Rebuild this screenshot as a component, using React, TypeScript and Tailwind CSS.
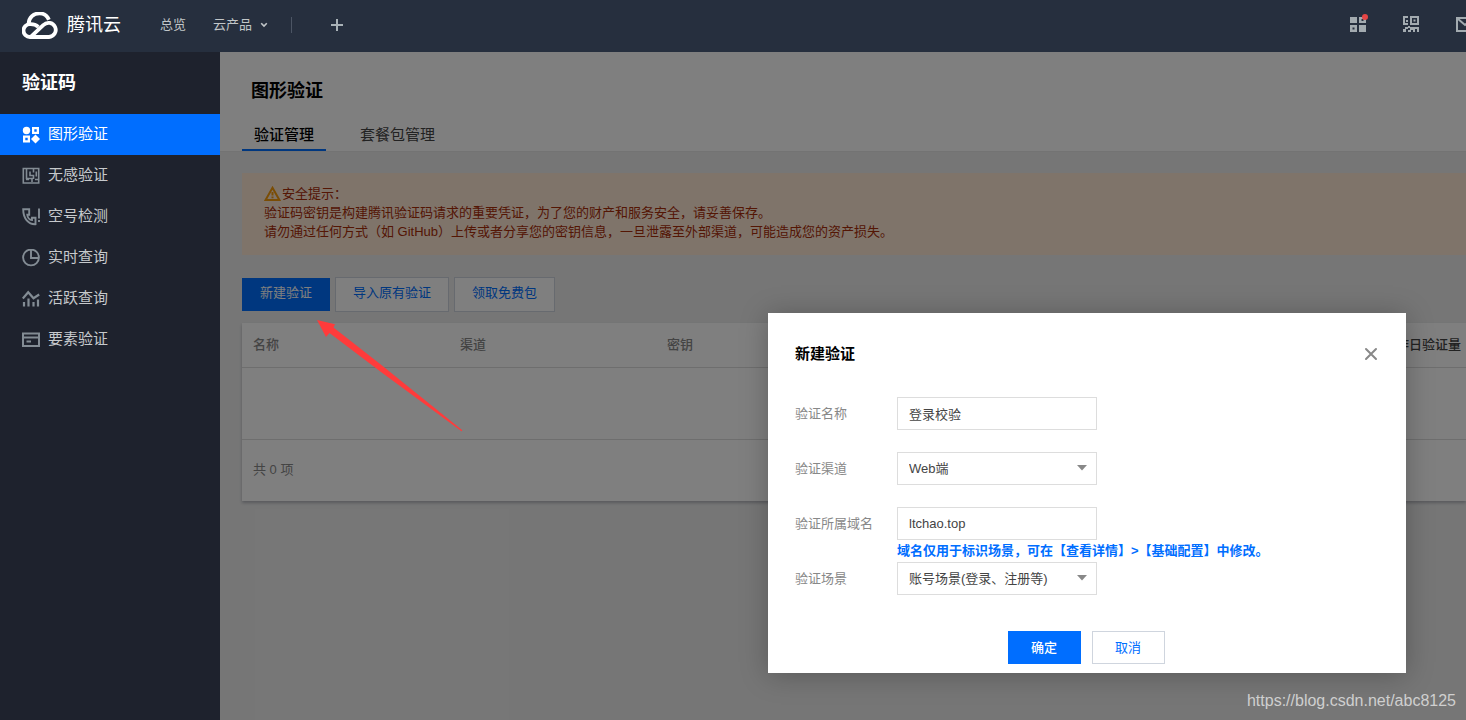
import React, { useState } from "react";

type IconProps = { className?: string };

const Logo = () => (
  <svg width="37" height="28" viewBox="1 1 37 28" fill="none" stroke="#fff" strokeWidth="3.800" aria-hidden="true">
    <path d="M7.6 12.6C8 6.4 12.500 2.400 18.500 2.400c4.300 0 7.900 2.700 9.400 6.300" />
    <path d="M17.300 15.800C14.700 13.500 12.100 12.900 8.800 13.100a6.400 6.400 0 0 0 .2 12.900h19a7.100 7.100 0 1 0-5.500-12L10 25.600" />
  </svg>
);

const ShapesIcon = ({ className }: IconProps) => (
  <svg className={className} width="18" height="18" viewBox="0 0 18 18" fill="currentColor" aria-hidden="true">
    <circle cx="4.500" cy="4.500" r="3.700" />
    <path d="M10 1h7v7h-7zm2.300 2.300v2.400h2.400V3.300z" fillRule="evenodd" />
    <path d="M1 9.500h7v7H1zm2.300 2.300v2.400h2.400v-2.400z" fillRule="evenodd" />
    <path d="M13.500 8.500L18 13l-4.500 4.500L9 13z" />
  </svg>
);

const MazeIcon = ({ className }: IconProps) => (
  <svg className={className} width="18" height="18" viewBox="0 0 18 18" fill="none" stroke="currentColor" strokeWidth="1.600" aria-hidden="true">
    <path d="M1.300 1.500h15.400v14.500H1.300z" />
    <path d="M4.500 2v9.500H10V15M8 4.500V8.500h3.500V12M11.500 2v3.500M14.300 4.500V9.500M13 12.500h3.500M4 12.500h3" />
  </svg>
);

const PhoneIcon = ({ className }: IconProps) => (
  <svg className={className} width="18" height="18" viewBox="0 0 18 18" fill="none" stroke="currentColor" strokeWidth="1.900" aria-hidden="true">
    <path d="M1.200 1.200h6v5.500H5.300C5.500 9.500 7.500 11.800 10 12v-2.300h3.500v6.500C6.500 16.500 1.200 10.500 1.200 1.200z" />
    <path d="M17 .500v10M17 12v2" />
  </svg>
);

const ClockIcon = ({ className }: IconProps) => (
  <svg className={className} width="18" height="18" viewBox="0 0 18 18" fill="none" stroke="currentColor" strokeWidth="1.900" aria-hidden="true">
    <circle cx="9" cy="8.500" r="7.900" />
    <path d="M9 1v8h8" />
  </svg>
);

const TrendIcon = ({ className }: IconProps) => (
  <svg className={className} width="18" height="18" viewBox="0 0 18 18" fill="none" stroke="currentColor" strokeWidth="2.200" aria-hidden="true">
    <path d="M.800 8.500l5.400-6.300 5.300 6L17.200 4.500" />
    <path d="M2 12v4.500M6.500 8.500v8M11.500 12v4.500M16 9.500v7" />
  </svg>
);

const CardIcon = ({ className }: IconProps) => (
  <svg className={className} width="18" height="18" viewBox="0 0 18 18" fill="none" stroke="currentColor" strokeWidth="2" aria-hidden="true">
    <path d="M1 2.500h16v12.500H1zM1 6.500h16M4.500 10.500H9" />
  </svg>
);

const AppsIcon = () => (
  <svg width="16" height="16" viewBox="0 0 16 16" fill="currentColor" aria-hidden="true">
    <path d="M0 1h7v6H0zM9 9h7v7H9z" />
    <path d="M9 1h7v6H9zm2.500 2v2h2V3zM0 9h7v7H0zm2.500 2.500v2h2v-2z" fillRule="evenodd" />
  </svg>
);

const QrIcon = () => (
  <svg width="16" height="16" viewBox="0 0 16 16" fill="currentColor" aria-hidden="true">
    <path d="M0 0h5v2H2v5h3v2H0zM3 4h2v2H3z" />
    <path d="M7 0h9v9H7zm2 2v5h5V2z" fillRule="evenodd" />
    <path d="M10.500 3.500h2v2h-2zM0 13h2v-2h3v2H3v3H0zM5 10h2v2H5zM7 11h7v2h-2v3h-2v-2H8v2H5v-2h2zM13 11h3v5h-2v-3h-1z" />
  </svg>
);

const MailIcon = () => (
  <svg width="18" height="16" viewBox="0 0 18 16" fill="none" stroke="currentColor" strokeWidth="2" aria-hidden="true">
    <path d="M1 2h16v13H1zM1.500 2.500L9 9l7.500-6.500" />
  </svg>
);

const WarnIcon = () => (
  <svg width="17" height="15" viewBox="0 0 17 15" fill="none" stroke="#f59a0b" strokeWidth="2" aria-hidden="true">
    <path d="M8.500 1.800L15.400 14H1.600z" />
    <path d="M8.500 6v3.500M8.500 10.500v1.700" />
  </svg>
);

const Caret = () => (
  <svg className="pointer-events-none absolute top-[13px] right-[10px]" width="10" height="6" viewBox="0 0 10 6" fill="#888" aria-hidden="true">
    <path d="M0 0h10L5 5.500z" />
  </svg>
);

const menu = [
  { label: "图形验证", Icon: ShapesIcon },
  { label: "无感验证", Icon: MazeIcon },
  { label: "空号检测", Icon: PhoneIcon },
  { label: "实时查询", Icon: ClockIcon },
  { label: "活跃查询", Icon: TrendIcon },
  { label: "要素验证", Icon: CardIcon },
];

const fieldClass = "h-[33px] w-[200px] border border-[#ddd] bg-white px-[11px] text-[13px] text-[#444] rounded-none outline-none";

function TopBar() {
  return (
    <header className="flex h-[52px] shrink-0 items-center overflow-hidden bg-[#262f3e] pl-[22px] text-[13px] text-[#c1c6c8]">
      <a href="#home" className="flex items-center gap-2 pb-px text-[18px] text-white">
        <Logo />
        <span>腾讯云</span>
      </a>
      <nav className="ml-[39px] flex items-center pb-[3px]">
        <a href="#overview">总览</a>
        <button type="button" className="ml-[27px] flex items-center gap-2">
          云产品
          <svg width="8" height="6" viewBox="0 0 8 6" fill="none" stroke="currentColor" strokeWidth="1.600" aria-hidden="true">
            <path d="M1.200 1.200L4 4l2.800-2.800" />
          </svg>
        </button>
        <span className="ml-[23px] h-4 w-px bg-[#4c5564]" />
        <button type="button" aria-label="添加" className="ml-[39px]">
          <svg width="12" height="12" viewBox="0 0 12 12" stroke="#a9b2b7" strokeWidth="2" aria-hidden="true">
            <path d="M6 0v12M0 6h12" />
          </svg>
        </button>
      </nav>
      <div className="mr-[-8px] ml-auto flex items-center gap-[37px] pb-1 text-[#a3abb0]">
        <button type="button" aria-label="应用" className="relative">
          <AppsIcon />
          <span className="absolute -top-[2px] -right-[2px] size-[6px] rounded-full bg-[#e54545]" />
        </button>
        <button type="button" aria-label="二维码">
          <QrIcon />
        </button>
        <button type="button" aria-label="消息">
          <MailIcon />
        </button>
      </div>
    </header>
  );
}

function Sidebar() {
  return (
    <aside className="w-[220px] shrink-0 bg-[#1e222d]">
      <h1 className="flex h-[62px] items-center pl-[22px] text-[18px] font-bold text-white">验证码</h1>
      <nav>
        {menu.map(({ label, Icon }, i) => (
          <a
            key={label}
            href="#menu"
            className={
              i === 0
                ? "flex h-[41px] items-center gap-2 bg-[#006eff] pl-[22px] text-[15px] text-white"
                : "flex h-[41px] items-center gap-2 pl-[22px] text-[15px] text-[#c6c9cc]"
            }
          >
            <Icon className={i === 0 ? "text-white" : "text-[#838c94]"} />
            {label}
          </a>
        ))}
      </nav>
    </aside>
  );
}

function Content() {
  const outline = "h-[35px] border border-[#cfd5de] bg-white px-[17px] pb-[3px] text-[#006eff]";
  return (
    <>
      <div className="bg-white pl-[22px] shadow-[0_1px_0_#e6e6e6]">
        <h2 className="flex h-[66px] items-end pb-[2px] pl-[9px] text-[18px] leading-[50px] font-bold text-black">图形验证</h2>
        <div role="tablist" className="flex gap-[22px] text-[15px]">
          <button type="button" role="tab" aria-selected="true" className="h-[33px] border-b-2 border-[#006eff] px-3 pt-[3px] font-medium text-black">
            验证管理
          </button>
          <button type="button" role="tab" aria-selected="false" className="h-[33px] border-b-2 border-transparent px-3 pt-[3px] text-[#444]">
            套餐包管理
          </button>
        </div>
      </div>
      <div className="pt-[22px] pl-[22px]">
        <div className="bg-[#ffe9d5] pt-[11px] pb-[14px] pl-[22px] text-[13px] leading-[19px] text-[#a82c08]">
          <p className="flex items-center gap-px">
            <WarnIcon />
            安全提示：
          </p>
          <p>验证码密钥是构建腾讯验证码请求的重要凭证，为了您的财产和服务安全，请妥善保存。</p>
          <p>请勿通过任何方式（如 GitHub）上传或者分享您的密钥信息，一旦泄露至外部渠道，可能造成您的资产损失。</p>
        </div>
        <div className="mt-[22px] flex items-center gap-[5px] text-[13px]">
          <button type="button" className="h-[33px] bg-[#006eff] px-[18px] pb-[3px] text-white">新建验证</button>
          <button type="button" className={outline}>导入原有验证</button>
          <button type="button" className={outline}>领取免费包</button>
        </div>
        <div className="mt-[11px] bg-white text-[13px] text-[#888] shadow-[0_2px_3px_rgba(54,58,80,0.32)]">
          <table className="w-full table-fixed text-left">
            <colgroup>
              <col className="w-[207px]" />
              <col className="w-[207px]" />
              <col className="w-[207px]" />
              <col />
              <col className="w-[70px]" />
            </colgroup>
            <thead>
              <tr className="h-[44px] border-b border-[#ddd]">
                <th className="pl-[11px] font-medium">名称</th>
                <th className="pl-[11px] font-medium">渠道</th>
                <th className="pl-[11px] font-medium">密钥</th>
                <th />
                <th className="font-medium whitespace-nowrap text-[#444]">昨日验证量</th>
              </tr>
            </thead>
            <tbody>
              <tr className="h-[72px] border-b border-[#ddd]">
                <td colSpan={5} />
              </tr>
            </tbody>
          </table>
          <p className="flex h-[61px] items-center pl-[11px]">共 0 项</p>
        </div>
      </div>
    </>
  );
}

function Field({ id, label, children }: { id: string; label: string; children: React.ReactNode }) {
  return (
    <div className="flex">
      <label htmlFor={id} className="w-[102px] shrink-0 text-[13px] leading-[33px] text-[#888]">
        {label}
      </label>
      {children}
    </div>
  );
}

function CreateDialog() {
  const [name, setName] = useState("登录校验");
  const [domain, setDomain] = useState("ltchao.top");
  return (
    <div
      role="dialog"
      aria-labelledby="dialog-title"
      className="absolute top-[313px] right-[60px] w-[638px] bg-white px-[27px] pt-[28px] pb-[9px] shadow-[0_2px_26px_rgba(0,0,0,0.25)]"
    >
      <div className="flex h-[27px] items-center justify-between">
        <h3 id="dialog-title" className="text-[15px] font-bold text-black">新建验证</h3>
        <button type="button" aria-label="关闭">
          <svg width="16" height="16" viewBox="0 0 16 16" stroke="#888" strokeWidth="2" strokeLinecap="round" aria-hidden="true">
            <path d="M3 2l10 10M13 2L3 12" />
          </svg>
        </button>
      </div>
      <form className="mt-[29px]" onSubmit={(e) => e.preventDefault()}>
        <div className="flex flex-col gap-[22px]">
          <Field id="name" label="验证名称">
            <input id="name" className={fieldClass} value={name} onChange={(e) => setName(e.target.value)} />
          </Field>
          <Field id="channel" label="验证渠道">
            <div className="relative">
              <select id="channel" className={`${fieldClass} appearance-none`}>
                <option>Web端</option>
              </select>
              <Caret />
            </div>
          </Field>
          <Field id="domain" label="验证所属域名">
            <input id="domain" className={fieldClass} value={domain} onChange={(e) => setDomain(e.target.value)} />
          </Field>
        </div>
        <p className="pl-[102px] text-[13px] leading-[22px] font-bold whitespace-nowrap text-[#006eff]">
          域名仅用于标识场景，可在【查看详情】&gt;【基础配置】中修改。
        </p>
        <Field id="scene" label="验证场景">
          <div className="relative">
            <select id="scene" className={`${fieldClass} appearance-none`}>
              <option>账号场景(登录、注册等)</option>
            </select>
            <Caret />
          </div>
        </Field>
        <div className="mt-9 flex justify-center gap-[11px] pr-[2px] text-[13px]">
          <button type="submit" className="h-[33px] w-[73px] bg-[#006eff] font-medium text-white">确定</button>
          <button type="button" className="h-[33px] w-[73px] border border-[#cfd5de] bg-white text-[#006eff]">取消</button>
        </div>
      </form>
    </div>
  );
}

export default function App() {
  return (
    <div className="relative flex min-h-screen flex-col overflow-hidden font-['Liberation_Sans','Noto_Sans_CJK_SC',sans-serif]">
      <TopBar />
      <div className="flex flex-1">
        <Sidebar />
        <main className="relative min-w-0 flex-1 bg-[#ededed]">
          <Content />
          <div className="absolute inset-0 bg-black/50" />
        </main>
      </div>
      <svg className="pointer-events-none absolute top-[320px] left-[317px]" width="146" height="112" viewBox="0 0 146 112" fill="#ff3b3b" aria-hidden="true">
        <path d="M0 0L18 4.300 16.500 7.500 65 45.500 145.300 110.300 144.500 111.300 64 52 12.500 13 9 17z" />
      </svg>
      <CreateDialog />
      <span className="absolute right-[10px] bottom-[7px] text-[16px] text-[#cfcfcf]">https://blog.csdn.net/abc8125</span>
    </div>
  );
}
